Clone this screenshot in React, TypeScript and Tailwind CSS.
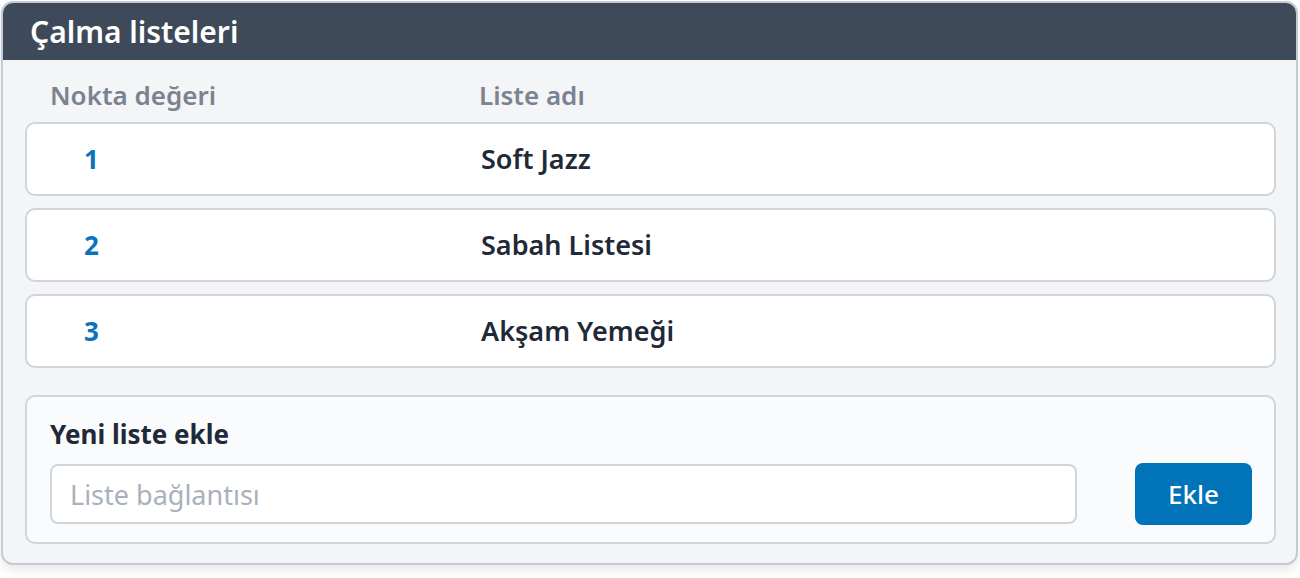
import React from "react";

const playlists = [
  { point: 1, name: "Soft Jazz" },
  { point: 2, name: "Sabah Listesi" },
  { point: 3, name: "Akşam Yemeği" },
];

export default function App() {
  return (
    <div
      className="min-h-screen bg-white pl-[1px] pr-[2px] pt-[1px] pb-[10px]"
      style={{ fontFamily: '"Noto Sans", "Open Sans", sans-serif' }}
    >
      <div className="overflow-hidden rounded-[12px] border-2 border-[#c3cad4] bg-[#f3f5f7] shadow-[0_6px_10px_rgba(0,0,0,0.08)]">
        <div className="flex h-[57px] items-center bg-[#3e4a59] px-[27px]">
          <h1 className="text-[30px] font-semibold leading-none text-white">Çalma listeleri</h1>
        </div>

        <div className="pb-[19px] pl-[22px] pr-[20px]">
          <div className="grid grid-cols-[454px_1fr] pb-[11px] pt-[19px] text-[26px] font-semibold leading-[32px] text-[#7b8391]">
            <span className="pl-[25px]">Nokta değeri</span>
            <span>Liste adı</span>
          </div>

          <div className="flex flex-col gap-[12px]">
            {playlists.map((p) => (
              <div
                key={p.point}
                className="grid h-[74px] grid-cols-[454px_1fr] items-center rounded-[10px] border-2 border-[#cfd5dd] bg-white"
              >
                <span className="pl-[57px] text-[26px] font-bold text-[#0b74b8]">{p.point}</span>
                <span className="text-[27px] font-semibold text-[#1f2937]">{p.name}</span>
              </div>
            ))}
          </div>

          <div className="mt-[27px] rounded-[10px] border-2 border-[#cfd5dd] bg-[#f9fbfc] pb-[17px] pl-[23px] pr-[22px] pt-[21px]">
            <h2 className="text-[26px] font-bold leading-[32px] text-[#1f2937]">Yeni liste ekle</h2>
            <div className="mt-[13px] flex items-center gap-[58px]">
              <input
                type="text"
                placeholder="Liste bağlantısı"
                className="h-[60px] flex-1 rounded-[8px] border-2 border-[#cfd5dd] bg-white px-[18px] text-[27px] text-[#1f2937] outline-none placeholder:text-[#a9b1bc]"
              />
              <button
                type="button"
                className="h-[62px] w-[117px] rounded-[8px] bg-[#0073b9] text-[26px] font-medium text-white"
              >
                Ekle
              </button>
            </div>
          </div>
        </div>
      </div>
    </div>
  );
}
